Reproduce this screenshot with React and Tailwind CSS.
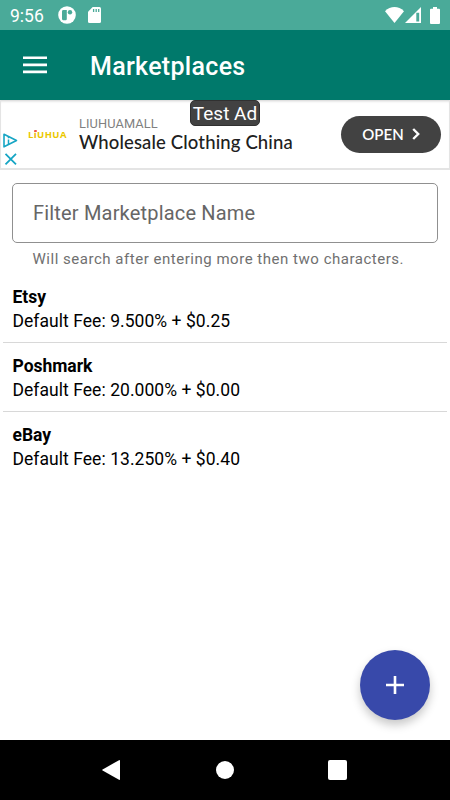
const marketplaces = [
  { name: "Etsy", fee: "9.500% + $0.25" },
  { name: "Poshmark", fee: "20.000% + $0.00" },
  { name: "eBay", fee: "13.250% + $0.40" },
];

const StatusBar = () => (
  <div className="h-[30px] shrink-0 flex items-center bg-[#4aaa99] text-white pl-[10px] pr-[10px]">
    <span className="w-[48px] text-[17.5px] leading-[30px] pt-[2px]">9:56</span>

    <svg className="w-[18px] h-[18px]" viewBox="0 0 18 18">
      <circle cx="9" cy="9" r="8.8" fill="#fff" />
      <path d="M5.4 4h3.4v9a1.2 1.2 0 0 1-1.2 1.2H5.1A1.2 1.2 0 0 1 4 13V5.4A1.4 1.4 0 0 1 5.4 4z" fill="#4aaa99" />
      <circle cx="12" cy="6.2" r="2.2" fill="#4aaa99" />
    </svg>
    <svg className="ml-3 w-[13px] h-[16px]" viewBox="0 0 13 16">
      <path d="M4.7 0h6.8A1.5 1.5 0 0 1 13 1.5v13a1.5 1.5 0 0 1-1.5 1.5h-10A1.5 1.5 0 0 1 0 14.5V4.8z" fill="#fff" />
      <path d="M5.6 2v3M8.2 2v3M10.7 2v3" stroke="#4aaa99" strokeWidth="1.3" />
    </svg>

    <svg className="ml-auto w-[19px] h-[16px]" viewBox="0 0 19 16">
      <path d="M0 4.2C5.5-1.3 13.5-1.3 19 4.2L9.5 16z" fill="#fff" />
    </svg>
    <svg className="ml-[1px] w-[17px] h-[16px]" viewBox="0 0 17 16">
      <path fillRule="evenodd" d="M0 16L16 0v16zM11.3 5.7v8.8h2.9V5.7z" fill="#fff" />
    </svg>
    <svg className="ml-[8px] w-[10px] h-[17px]" viewBox="0 0 10 17">
      <path d="M3 0h4v1.7h2a1 1 0 0 1 1 1V16a1 1 0 0 1-1 1H1a1 1 0 0 1-1-1V2.7a1 1 0 0 1 1-1h2z" fill="#fff" />
    </svg>
  </div>
);

const AppBar = () => (
  <header className="h-[70px] shrink-0 flex items-center bg-[#00796b] text-white pl-[23px]">
    <button className="w-6 mb-px" aria-label="Open menu">
      <svg className="w-6 h-[18px]" viewBox="0 0 24 18" fill="#fff">
        <path d="M0 .5h24v2.6H0zM0 7.6h24v2.6H0zM0 14.6h24v2.6H0z" />
      </svg>
    </button>
    <h1 className="ml-[43px] pt-[3px] text-[25px] leading-[30px] tracking-[0.3px] font-medium">Marketplaces</h1>
  </header>
);

const AdBanner = () => (
  <div className="relative h-[70px] shrink-0 flex items-center border-x border-b-2 border-[#e4e4e4] bg-white shadow-[inset_0_3px_3px_-2px_#d0d0d0]">
    <div className="w-[16px] ml-[2px] mt-[30px] flex flex-col gap-[5px]">
      <svg className="w-[15px] h-[15px]" viewBox="0 0 15 15" fill="none" stroke="#16a5c4">
        <path d="M1 1.2L13.5 7.5L1 13.8z" strokeWidth="1.6" strokeLinejoin="round" />
        <path d="M5.5 6.5v5M5.5 3.8v1.4" strokeWidth="1.5" />
      </svg>
      <svg className="w-[15px] h-[12px]" viewBox="0 0 15 12" fill="none" stroke="#16a5c4">
        <path d="M2.5 .8l10.5 10.5M13 .8l-10.5 10.5" strokeWidth="1.8" />
      </svg>
    </div>

    <div className="relative w-[51px] ml-[9px] mt-[2px] font-['Open_Sans',sans-serif] font-bold text-[9.5px] leading-[12px] tracking-[0.4px] text-[#ebc800] whitespace-nowrap">
      L<span className="text-[#efb200]">i</span>UHUA
      <span className="absolute left-[6px] top-[1px] w-[3px] h-[2px] rounded-full bg-[#ef5350]" />
    </div>

    <div className="w-[262px] pb-px">
      <div className="text-[12.8px] leading-[17px] tracking-[0.1px] text-[#808080]">LIUHUAMALL</div>
      <div className="font-['Lato',sans-serif] text-[18.5px] leading-[21px] tracking-[0.14px] font-medium text-[#202020] whitespace-nowrap">
        Wholesale Clothing China
      </div>
    </div>

    <button className="w-[100px] h-[37px] shrink-0 rounded-full bg-[#424242] text-white flex items-center justify-center gap-[8px]">
      <span className="font-['Lato',sans-serif] font-semibold text-[15px] leading-[18px]">OPEN</span>
      <svg className="w-[8px] h-[12px]" viewBox="0 0 8 12" fill="none" stroke="#fff" strokeWidth="2.4">
        <path d="M1.2 1l5 5-5 5" />
      </svg>
    </button>

    <div className="absolute left-[189px] top-0 w-[70px] h-[26px] rounded-[5px] border border-[#303030] bg-[#424242] text-white text-center text-[19px] leading-[26px] whitespace-nowrap">
      Test Ad
    </div>
  </div>
);

const FilterField = () => (
  <div className="px-[12px] pt-[13px]">
    <div className="h-[60px] flex items-center rounded-[5px] border border-[#909090] px-[20px] pb-px text-[20px] tracking-[0.18px] text-[#666]">
      Filter Marketplace Name
    </div>
    <p className="pl-[20.5px] mt-[6px] text-[15px] leading-[20px] tracking-[0.52px] text-[#707070] whitespace-nowrap">
      Will search after entering more then two characters.
    </p>
  </div>
);

const MarketplaceList = () => (
  <ul className="mx-[3px] mt-[5px] text-[17.5px] leading-[24px] tracking-[0.05px] text-black">
    {marketplaces.map((m) => (
      <li key={m.name} className="h-[68.8px] pl-[9.5px] pt-[11px] border-b border-[#d8d8d8] last:border-b-0">
        <div className="font-bold tracking-[-0.03px]">{m.name}</div>
        <div>Default Fee: {m.fee}</div>
      </li>
    ))}
  </ul>
);

const NavBar = () => (
  <nav className="h-[60px] shrink-0 flex items-center bg-black pl-[102px] pr-[103px]">
    <svg className="w-[18px] h-[20px]" viewBox="0 0 18 20">
      <path d="M18 .8v18.4a.7.7 0 0 1-1 .6L.6 10.6a.7.7 0 0 1 0-1.2L17 .2a.7.7 0 0 1 1 .6z" fill="#fff" />
    </svg>
    <span className="ml-[96px] w-[18px] h-[18px] rounded-full bg-white" />
    <span className="ml-auto w-[19px] h-[20px] rounded-[2px] bg-white" />
  </nav>
);

const App = () => {
  return (
    <div className="relative w-[450px] h-[800px] flex flex-col overflow-hidden bg-white font-['Roboto',sans-serif]">
      <StatusBar />
      <AppBar />
      <AdBanner />
      <main className="flex-1">
        <FilterField />
        <MarketplaceList />
      </main>
      <NavBar />

      <button
        className="absolute right-[20px] bottom-[80px] w-[70px] h-[70px] rounded-full bg-[#3849aa] flex items-center justify-center shadow-[0_5px_10px_rgba(0,0,0,0.22)]"
        aria-label="Add marketplace"
      >
        <svg className="w-[18px] h-[18px]" viewBox="0 0 18 18" stroke="#fff" strokeWidth="2.6">
          <path d="M9 0v18M0 9h18" />
        </svg>
      </button>
    </div>
  );
};

export default App;
